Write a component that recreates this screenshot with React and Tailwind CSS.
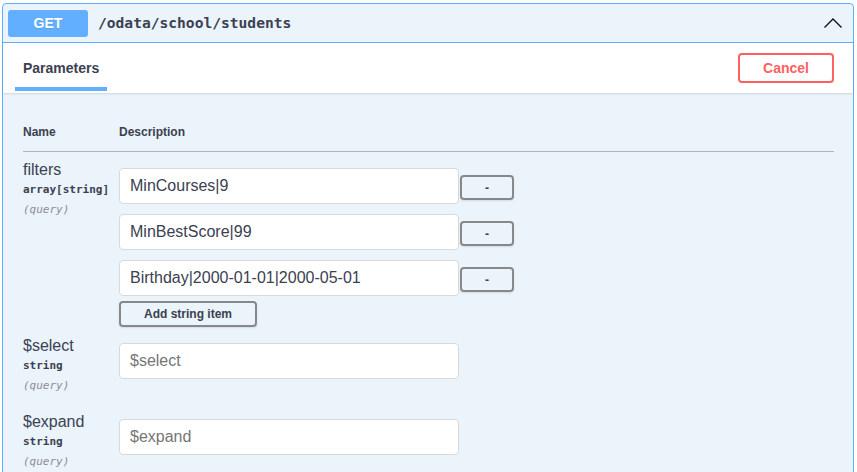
import React from 'react';

const sans = { fontFamily: '"Liberation Sans", Arial, sans-serif' };
const mono = { fontFamily: '"DejaVu Sans Mono", "Liberation Mono", monospace' };

const ParamName = ({ name, type }) => (
  <div className="w-[96px] shrink-0 text-[#3b4151]">
    <div className="text-[16px] leading-5" style={sans}>{name}</div>
    <div className="text-[11px] leading-5 font-bold" style={mono}>{type}</div>
    <div className="text-[11px] leading-5 italic text-[#8b8e95]" style={mono}>(query)</div>
  </div>
);

const TextInput = ({ value, placeholder }) => (
  <input
    type="text"
    defaultValue={value}
    placeholder={placeholder}
    className="w-[340px] h-[36px] px-[10px] bg-white border border-[#d9d9d9] rounded-[4px] text-[16px] text-[#3b4151] placeholder:text-[#757575] outline-none"
    style={sans}
  />
);

const GrayButton = ({ className, children }) => (
  <button
    className={`border-2 border-[#888888] rounded-[4px] shadow-[0_1px_2px_rgba(0,0,0,0.1)] text-[#3b4151] font-bold bg-transparent ${className}`}
    style={sans}
  >
    {children}
  </button>
);

export default function App() {
  const filters = ['MinCourses|9', 'MinBestScore|99', 'Birthday|2000-01-01|2000-05-01'];

  return (
    <div className="w-[857px] h-[472px] overflow-hidden bg-white pl-[2px] pt-[3px]" style={sans}>
      <div className="w-[852px] h-[500px] border border-[#61affe] rounded-[4px] bg-[#ebf3fb]">
        {/* Summary */}
        <div className="flex items-center h-[39px] px-[5px] border-b border-[#61affe]">
          <span className="w-[80px] h-[27px] flex items-center justify-center rounded-[3px] bg-[#61affe] text-white text-[14px] font-bold [text-shadow:0_1px_0_rgba(0,0,0,0.1)]">
            GET
          </span>
          <span className="ml-[10px] text-[14.6px] font-bold text-[#3b4151]" style={mono}>
            /odata/school/students
          </span>
          <svg className="ml-auto mr-[5px]" width="20" height="20" viewBox="0 0 20 20">
            <polyline points="1.5,14.5 10,6 18.5,14.5" fill="none" stroke="#111" strokeWidth="1.4" />
          </svg>
        </div>

        {/* Section header */}
        <div className="flex items-start justify-between h-[50px] pl-[12px] pr-[19px] bg-white shadow-[0_1px_2px_rgba(0,0,0,0.12)]">
          <div className="pt-[15px]">
            <div className="px-2 text-[14px] leading-5 font-bold text-[#3b4151]">Parameters</div>
            <div className="mt-[9px] h-[4px] bg-[#61affe]" />
          </div>
          <button className="mt-[10px] w-[96px] h-[30px] border-2 border-[#ff6060] rounded-[4px] text-[#ff6060] text-[14px] font-bold bg-transparent">
            Cancel
          </button>
        </div>

        {/* Table */}
        <div className="pl-[20px] pr-[19px]">
          <div className="flex items-center pt-[30px] pb-[10px] border-b border-[#afb4bd] text-[12px] font-bold text-[#3b4151]">
            <div className="w-[96px]">Name</div>
            <div>Description</div>
          </div>

          <div className="flex mt-[8px]">
            <ParamName name="filters" type="array[string]" />
            <div className="pt-[8px] flex flex-col">
              <div className="flex flex-col gap-[10px]">
                {filters.map((f) => (
                  <div key={f} className="flex items-start">
                    <TextInput value={f} />
                    <GrayButton className="ml-px mt-[7px] w-[54px] h-[25px] text-[12px] leading-none">-</GrayButton>
                  </div>
                ))}
              </div>
              <GrayButton className="mt-[5px] w-[138px] h-[26px] text-[12px]">Add string item</GrayButton>
            </div>
          </div>

          <div className="flex mt-[9px]">
            <ParamName name="$select" type="string" />
            <div className="pt-[7px]">
              <TextInput placeholder="$select" />
            </div>
          </div>

          <div className="flex mt-[16px]">
            <ParamName name="$expand" type="string" />
            <div className="pt-[7px]">
              <TextInput placeholder="$expand" />
            </div>
          </div>
        </div>
      </div>
    </div>
  );
}
